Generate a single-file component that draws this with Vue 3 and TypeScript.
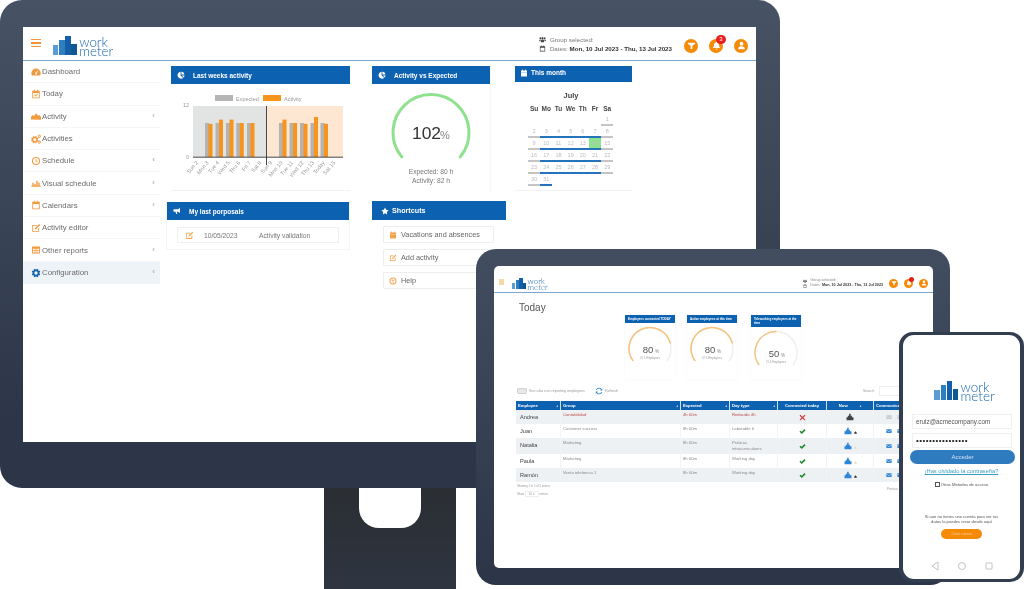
<script setup lang="ts">
const cog = (cx: number, cy: number, r: number) => {
  const pts: string[] = []
  for (let i = 0; i < 24; i++) {
    const rad = i % 3 === 0 ? r * 0.72 : r
    const a = (i * Math.PI) / 12
    pts.push(`${(cx + rad * Math.cos(a)).toFixed(2)} ${(cy + rad * Math.sin(a)).toFixed(2)}`)
  }
  const h = r * 0.38
  return `M${pts.join('L')}zM${cx - h} ${cy}a${h} ${h} 0 1 0 ${2 * h} 0a${h} ${h} 0 1 0 ${-2 * h} 0z`
}

const icons: Record<string, string> = {
  tach: 'M8 2.5a7.5 7.5 0 0 0-7.5 7.5c0 1.5.4 2.7 1 3.5h13c.6-.8 1-2 1-3.5A7.5 7.5 0 0 0 8 2.5zM8 12a1.6 1.6 0 1 1 .3-3.2l2.2-3 .9.6-2.1 3.1A1.6 1.6 0 0 1 8 12z',
  today: 'M2 2.8h2.5V1.2H6v1.6h4V1.2h1.5v1.6H14v12H2zM3.4 6.2v7.2h9.2V6.2zM5 9.4l1-1 1.4 1.4L10.2 7l1 1-3.8 3.8z',
  area: 'M0 13.5V9l3-2.5 2 1.5 3-4.5 3.5 4 2-1 2.5 3v4.5z',
  gears: cog(6, 9, 6) + cog(13.2, 3.6, 2.8) + cog(13.2, 13, 2.8),
  clock: 'M8 1.5a6.5 6.5 0 1 0 0 13 6.5 6.5 0 0 0 0-13zM8 3.2a4.8 4.8 0 1 1 0 9.6 4.8 4.8 0 0 1 0-9.6zM7.3 5h1.4v2.7l2 1.2-.7 1.1-2.7-1.6z',
  bars: 'M.5 12.5h15V14H.5zM2 7.5h2.2v5H2zM5.2 9.5h2.2v3H5.2zM8.4 4.5h2.2v8H8.4zM11.6 7h2.2v5.5h-2.2z',
  cal: 'M2 2.8h2.5V1.2H6v1.6h4V1.2h1.5v1.6H14v12H2zM3.4 6.2v7.2h9.2V6.2z',
  calFill: 'M2 2.8h2.5V1.2H6v1.6h4V1.2h1.5v1.6H14v4H2zM2 7.5h12v7.3H2z',
  edit: 'M2 3h8L8.6 4.4H3.4v8.2h8.2V8.4L13 7v7H2zM13 1.4l1.6 1.6-6.4 6.4-2.2.6.6-2.2z',
  table: 'M1.5 2.5h13v11h-13zM3 6v2h3V6zM7 6v2h2V6zM10 6v2h3V6zM3 9.3V12h3V9.3zM7 9.3V12h2V9.3zM10 9.3V12h3V9.3z',
  cog: cog(8, 8, 7),
  pie: 'M7.2 1.5v7.3l5.2 5.2A7 7 0 1 1 7.2 1.5zM8.8 1a7 7 0 0 1 6.2 6.2H8.8zM15 8.8a7 7 0 0 1-1.5 4.1L9.4 8.8z',
  horn: 'M14 2v10l-4-2.5H7.4L8.6 14H6.4L5 9.5H3a2.5 2.5 0 0 1 0-5h7z',
  star: 'M8 1l2.2 4.6 5 .7-3.6 3.5.9 5L8 12.4l-4.5 2.4.9-5L.8 6.3l5-.7z',
  help: 'M8 1a7 7 0 1 0 0 14A7 7 0 0 0 8 1zM8 3a5 5 0 1 1 0 10A5 5 0 0 1 8 3zM5 5.5h6v1.6H8.8v4.4H7.2V7.1H5z',
  group: 'M3 3a2 2 0 1 1 0 4 2 2 0 0 1 0-4zM8 2.5a2.4 2.4 0 1 1 0 4.8 2.4 2.4 0 0 1 0-4.8zM13 3a2 2 0 1 1 0 4 2 2 0 0 1 0-4zM4.6 14V10.5C4.6 9 6 8 8 8s3.4 1 3.4 2.5V14zM.5 12V9.5C.5 8.5 1.5 8 3 8c.6 0 1 .1 1.3.3-.6.5-.9 1.2-.9 2V12zM15.5 12V9.5c0-1-1-1.5-2.5-1.5-.6 0-1 .1-1.3.3.6.5.9 1.2.9 2V12z',
  filter: 'M1.5 3h13v1.8L9.5 9v5h-3V9L1.5 4.8z',
  bell: 'M8 1.5c.6 0 1 .4 1 1v.3c2.2.5 3.5 2.3 3.5 4.7 0 2 .7 3 1.5 3.8v1.2H2v-1.2c.8-.8 1.5-1.8 1.5-3.8 0-2.4 1.3-4.2 3.5-4.7v-.3c0-.6.4-1 1-1zM6.4 13.8h3.2a1.6 1.6 0 0 1-3.2 0z',
  user: 'M8 1.5a3.4 3.4 0 1 1 0 6.8 3.4 3.4 0 0 1 0-6.8zM2 14.5c0-3.2 2.4-5.2 6-5.2s6 2 6 5.2z',
  mail: 'M1 3h14v10H1zM2 4.6l6 4.6 6-4.6v1.3l-6 4.6-6-4.6z',
  check: 'M1 8.5L3.4 6l3 2.8 6-6.3L15 5l-8.5 8.8z',
  cross: 'M3.2 1.5L8 6.2l4.8-4.7 2 2L10 8.4l4.8 4.6-2 2L8 10.4 3.2 15l-2-2L6 8.4 1.2 3.5z',
  building: 'M1 14.5v-6h2.6v-3h2.6V1.5h3.2v4h2.4v3H15v6z',
  refresh: 'M8 1.5a6.5 6.5 0 0 1 5.2 2.6l1.3-1.3V7h-4.2l1.6-1.6A4.6 4.6 0 0 0 3.6 6H1.8A6.5 6.5 0 0 1 8 1.5zM14.2 10A6.5 6.5 0 0 1 2.8 11.9l-1.3 1.3V9h4.2l-1.6 1.6A4.6 4.6 0 0 0 12.4 10z',
}

const menu = [
  { label: 'Dashboard', icon: 'tach' },
  { label: 'Today', icon: 'today' },
  { label: 'Activity', icon: 'area', more: true },
  { label: 'Activities', icon: 'gears' },
  { label: 'Schedule', icon: 'clock', more: true },
  { label: 'Visual schedule', icon: 'bars', more: true },
  { label: 'Calendars', icon: 'cal', more: true },
  { label: 'Activity editor', icon: 'edit' },
  { label: 'Other reports', icon: 'table', more: true },
  { label: 'Configuration', icon: 'cog', more: true, active: true },
]

const shortcuts = [
  { label: 'Vacations and absences', icon: 'calFill' },
  { label: 'Add activity', icon: 'edit' },
  { label: 'Help', icon: 'help' },
]

const arc = (cx: number, cy: number, r: number, from: number, to: number) => {
  const pt = (deg: number) => {
    const a = (deg * Math.PI) / 180
    return `${(cx + r * Math.sin(a)).toFixed(2)} ${(cy - r * Math.cos(a)).toFixed(2)}`
  }
  return `M${pt(from)}A${r} ${r} 0 ${to - from > 180 ? 1 : 0} 1 ${pt(to)}`
}

// chart: y axis runs 0-12 over 51px, baseline at 157
const barY = (v: number) => 157 - (v * 51) / 12
const dayLabels = ['Sun 2', 'Mon 3', 'Tue 4', 'Wed 5', 'Thu 6', 'Fri 7', 'Sat 8', 'Sun 9', 'Mon 10', 'Tue 11', 'Wed 12', 'Thu 13', 'Today', 'Sat 15']
const tickX = (i: number) => 197.5 + i * 10.55
const chartBars = [
  { x: 205, actual: 7.8 },
  { x: 215.5, actual: 8.8 },
  { x: 226, actual: 8.8 },
  { x: 236.3, actual: 8 },
  { x: 247, actual: 8 },
  { x: 279, actual: 8.8 },
  { x: 289.5, actual: 8 },
  { x: 300, actual: 7.8 },
  { x: 310.5, actual: 9.4 },
  { x: 320.5, actual: 7.8 },
]

const weekDays = ['Su', 'Mo', 'Tu', 'We', 'Th', 'Fr', 'Sa']
const calendarCells = Array.from({ length: 37 }, (_, i) => {
  const day = i - 5
  return { day: day > 0 ? day : null, weekday: i % 7, today: day === 14 }
})

const miniCards = [
  { title: 'Employees connected TODAY', pct: 80, sub: '4 / 5 Employees', tall: false },
  { title: 'Active employees at this time', pct: 80, sub: '4 / 5 Employees', tall: false },
  { title: 'Teleworking employees at the time', pct: 50, sub: '2 / 4 Employees', tall: true },
]
const miniEnd = (pct: number) => -125 + (250 * pct) / 100

const columns = [
  { label: 'Employee', sort: true },
  { label: 'Group', sort: true },
  { label: 'Expected', sort: true },
  { label: 'Day type', sort: true },
  { label: 'Connected today', center: true },
  { label: 'Now', sort: true, center: true },
  { label: 'Communication' },
]
const rows = [
  { name: 'Andrea', group: 'Contabilidad', expected: '4h 00m', day: 'Reducido 4h', ok: false, late: true, extra: '' },
  { name: 'Juan', group: 'Customer success', expected: '8h 00m', day: 'Laborable 6', ok: true, late: false, extra: 'dark' },
  { name: 'Natalia', group: 'Marketing', expected: '8h 00m', day: 'Práticas intracurriculares', ok: true, late: false, extra: 'pale', tall: true },
  { name: 'Paula', group: 'Marketing', expected: '8h 00m', day: 'Working day', ok: true, late: false, extra: 'pale' },
  { name: 'Ramón', group: 'Venta telefonica 1', expected: '8h 00m', day: 'Working day', ok: true, late: false, extra: 'dark' },
]
</script>

<template>
  <div class="stage">
    <div class="stand"><div class="stand__notch"></div></div>

    <section class="monitor">
      <div class="monitor__screen">
        <header class="top">
          <span class="burger"><i></i><i></i><i></i></span>
          <div class="logo logo--lg">
            <span class="logo__bars"><i></i><i></i><i></i><i></i></span>
            <span class="logo__word">work<br />meter</span>
          </div>
          <div class="top__info">
            <div class="top__line">
              <svg class="ico" viewBox="0 0 16 16"><path :d="icons.group" /></svg>
              Group selected:
            </div>
            <div class="top__line">
              <svg class="ico" viewBox="0 0 16 16"><path :d="icons.cal" /></svg>
              <span>Dates: <b>Mon, 10 Jul 2023 - Thu, 13 Jul 2023</b></span>
            </div>
          </div>
          <div class="round-btns">
            <span class="round"><svg viewBox="0 0 16 16"><path :d="icons.filter" /></svg></span>
            <span class="round">
              <svg viewBox="0 0 16 16"><path :d="icons.bell" /></svg>
              <em class="round__badge">3</em>
            </span>
            <span class="round"><svg viewBox="0 0 16 16"><path :d="icons.user" /></svg></span>
          </div>
        </header>

        <div class="desk">
          <nav class="side">
            <a
              v-for="item in menu"
              :key="item.label"
              class="side__row"
              :class="{ 'side__row--active': item.active }"
            >
              <svg class="side__ico" viewBox="0 0 16 16"><path :d="icons[item.icon]" /></svg>
              <span class="side__txt">{{ item.label }}</span>
              <span v-if="item.more" class="side__more">‹</span>
            </a>
          </nav>

          <main class="desk__main">
            <div class="col col--a">
              <div class="card card--weeks">
                <h4 class="card__head">
                  <svg viewBox="0 0 16 16"><path :d="icons.pie" /></svg>
                  Last weeks activity
                </h4>
                <svg class="chart" viewBox="171 84 179 106">
                  <rect x="215" y="95" width="18" height="6" fill="#b4b4b4" />
                  <text x="236" y="100.5" class="chart__txt">Expected</text>
                  <rect x="263" y="95" width="18" height="6" fill="#f7941d" />
                  <text x="284" y="100.5" class="chart__txt">Activity</text>
                  <rect x="193" y="106" width="73" height="51" fill="#e2e4e3" />
                  <rect x="267" y="106" width="76" height="51" fill="#fde7d2" />
                  <text x="189" y="107" text-anchor="end" class="chart__txt">12</text>
                  <text x="189" y="159" text-anchor="end" class="chart__txt">0</text>
                  <g v-for="bar in chartBars" :key="bar.x">
                    <rect :x="bar.x" :y="barY(8)" width="4" :height="157 - barY(8)" fill="#b5b3b0" />
                    <rect :x="bar.x + 3.5" :y="barY(bar.actual)" width="4" :height="157 - barY(bar.actual)" fill="#f7941d" />
                  </g>
                  <path d="M193 157.2H343M266.5 106V165" stroke="#333" stroke-width="0.9" fill="none" />
                  <text
                    v-for="(d, i) in dayLabels"
                    :key="d"
                    class="chart__txt"
                    text-anchor="end"
                    :transform="`translate(${tickX(i) + 1} 163) rotate(-50)`"
                  >{{ d }}</text>
                </svg>
              </div>

              <div class="card card--prop">
                <h4 class="card__head">
                  <svg viewBox="0 0 16 16"><path :d="icons.horn" /></svg>
                  My last porposals
                </h4>
                <div class="prop">
                  <svg class="prop__ico" viewBox="0 0 16 16"><path :d="icons.edit" /></svg>
                  <span class="prop__date">10/05/2023</span>
                  <span>Activity validation</span>
                </div>
              </div>
            </div>

            <div class="col col--b">
              <div class="card card--vs">
                <h4 class="card__head">
                  <svg viewBox="0 0 16 16"><path :d="icons.pie" /></svg>
                  Activity vs Expected
                </h4>
                <svg class="gauge" viewBox="0 0 118 83">
                  <path :d="arc(59, 48.5, 38, -130, 130)" fill="none" stroke="#8ee28e" stroke-width="3" stroke-linecap="round" />
                  <text x="54.5" y="55" text-anchor="middle" class="gauge__val">102</text>
                  <text x="73" y="55" text-anchor="middle" class="gauge__pct">%</text>
                </svg>
                <p class="gauge__note">Expected: 80 h<br />Activity: 82 h</p>
              </div>

              <div class="card card--short">
                <h4 class="card__head card__head--short">
                  <svg viewBox="0 0 16 16"><path :d="icons.star" /></svg>
                  Shortcuts
                </h4>
                <a v-for="s in shortcuts" :key="s.label" class="short">
                  <svg class="short__ico" viewBox="0 0 16 16"><path :d="icons[s.icon]" /></svg>
                  {{ s.label }}
                </a>
              </div>
            </div>

            <div class="col col--c">
              <div class="card card--month">
                <h4 class="card__head card__head--month">
                  <svg viewBox="0 0 16 16"><path :d="icons.calFill" /></svg>
                  This month
                </h4>
                <div class="month">July</div>
                <div class="cal">
                  <b v-for="d in weekDays" :key="d" class="cal__wd">{{ d }}</b>
                  <span
                    v-for="(c, i) in calendarCells"
                    :key="i"
                    class="cal__day"
                    :class="{
                      'cal__day--none': !c.day,
                      'cal__day--work': c.day && c.weekday > 0 && c.weekday < 6,
                      'cal__day--today': c.today,
                    }"
                  >{{ c.day }}</span>
                </div>
              </div>
            </div>
          </main>
        </div>
      </div>
    </section>

    <section class="tablet">
      <div class="tablet__screen">
        <header class="ttop">
          <span class="ttop__burger"></span>
          <div class="logo logo--md">
            <span class="logo__bars"><i></i><i></i><i></i><i></i></span>
            <span class="logo__word">work<br />meter</span>
          </div>
          <div class="ttop__info">
            <div class="ttop__line">
              <svg class="ico" viewBox="0 0 16 16"><path :d="icons.group" /></svg>
              Group selected:
            </div>
            <div class="ttop__line">
              <svg class="ico" viewBox="0 0 16 16"><path :d="icons.cal" /></svg>
              <span>Dates: <b>Mon, 10 Jul 2023 - Thu, 13 Jul 2023</b></span>
            </div>
          </div>
          <div class="round-btns round-btns--sm">
            <span class="round"><svg viewBox="0 0 16 16"><path :d="icons.filter" /></svg></span>
            <span class="round">
              <svg viewBox="0 0 16 16"><path :d="icons.bell" /></svg>
              <em class="round__badge"></em>
            </span>
            <span class="round"><svg viewBox="0 0 16 16"><path :d="icons.user" /></svg></span>
          </div>
        </header>

        <div class="today">
          <h2 class="today__title">Today</h2>

          <div class="minis">
            <div v-for="m in miniCards" :key="m.title" class="mini">
              <div class="mini__head" :class="{ 'mini__head--tall': m.tall }">{{ m.title }}</div>
              <svg class="mini__gauge" viewBox="0 0 50 42">
                <path :d="arc(25, 25.5, 21, -125, 125)" fill="none" stroke="#efefef" stroke-width="1.5" stroke-linecap="round" />
                <path :d="arc(25, 25.5, 21, -125, miniEnd(m.pct))" fill="none" stroke="#f6c27c" stroke-width="1.5" stroke-linecap="round" />
                <text x="23" y="29.5" text-anchor="middle" class="mini__val">{{ m.pct }}</text>
                <text x="32" y="29.5" text-anchor="middle" class="mini__pct">%</text>
                <text x="25" y="35.5" text-anchor="middle" class="mini__sub">{{ m.sub }}</text>
              </svg>
            </div>
          </div>

          <div class="tools">
            <span class="switch"></span>
            <span class="tools__txt">See also non reporting employees</span>
            <svg class="tools__refresh" viewBox="0 0 16 16"><path :d="icons.refresh" /></svg>
            <span class="tools__txt">Refresh</span>
            <span class="tools__search">Search:</span>
            <span class="tools__input"></span>
          </div>

          <div class="grid">
            <div class="grid__row grid__row--head">
              <div v-for="c in columns" :key="c.label" class="grid__th" :class="{ 'is-center': c.center }">
                <span>{{ c.label }}</span><span v-if="c.sort" class="grid__sort">♦</span>
              </div>
            </div>
            <div
              v-for="r in rows"
              :key="r.name"
              class="grid__row"
              :class="{ 'grid__row--late': r.late, 'grid__row--tall': r.tall }"
            >
              <div class="grid__td grid__name">{{ r.name }}</div>
              <div class="grid__td">{{ r.group }}</div>
              <div class="grid__td">{{ r.expected }}</div>
              <div class="grid__td">{{ r.day }}</div>
              <div class="grid__td grid__cell">
                <svg class="grid__mark" :class="r.ok ? 'is-ok' : 'is-bad'" viewBox="0 0 16 16"><path :d="r.ok ? icons.check : icons.cross" /></svg>
              </div>
              <div class="grid__td grid__cell">
                <svg class="grid__now" :class="{ 'is-dark': !r.ok }" viewBox="0 0 16 16"><path :d="icons.building" /></svg>
                <svg v-if="r.extra" class="grid__extra" :class="`is-${r.extra}`" viewBox="0 0 16 16"><path :d="icons.building" /></svg>
              </div>
              <div class="grid__td grid__mails">
                <svg class="grid__mail" :class="{ 'is-off': !r.ok }" viewBox="0 0 16 16"><path :d="icons.mail" /></svg>
                <svg class="grid__mail" :class="{ 'is-off': !r.ok }" viewBox="0 0 16 16"><path :d="icons.mail" /></svg>
              </div>
            </div>
          </div>

          <div class="tfoot">
            <div>
              <p>Showing 1 to 5 of 5 entries</p>
              <p class="tfoot__len">Show <span class="tfoot__sel">10 ▾</span> entries</p>
            </div>
            <span class="tfoot__prev">Previous</span>
          </div>
        </div>
      </div>
    </section>

    <section class="phone">
      <div class="phone__screen">
        <div class="logo logo--xl">
          <span class="logo__bars"><i></i><i></i><i></i><i></i></span>
          <span class="logo__word">work<br />meter</span>
        </div>
        <div class="pfield">eruiz@acmecompany.com</div>
        <div class="pfield pfield--pass">••••••••••••••••</div>
        <button type="button" class="pbtn">Acceder</button>
        <a class="plink">¡Has olvidado la contraseña?</a>
        <div class="pother"><i></i>Otros Metodos de acceso</div>
        <p class="pnote">Si aun no tienes una cuenta para ver tus<br />datos la puedes crear desde aquí</p>
        <button type="button" class="pcreate">Crear cuenta</button>
        <div class="pnav">
          <svg viewBox="0 0 10 10"><path d="M8 1L2 5l6 4z" /></svg>
          <svg viewBox="0 0 10 10"><circle cx="5" cy="5" r="3.5" /></svg>
          <svg viewBox="0 0 10 10"><rect x="2" y="2" width="6" height="6" rx="0.5" /></svg>
        </div>
      </div>
    </section>
  </div>
</template>

<style scoped>
.stage {
  position: relative;
  width: 1024px;
  height: 589px;
  overflow: hidden;
  background: #fff;
  font-family: 'Liberation Sans', Arial, sans-serif;
  color: #666;
}

svg {
  fill: currentColor;
  fill-rule: evenodd;
}

/* devices */
.stand {
  position: absolute;
  left: 324px;
  top: 480px;
  width: 132px;
  height: 109px;
  background: linear-gradient(#2a2d31, #2e3541);
}

.stand__notch {
  position: absolute;
  left: 35px;
  top: 8px;
  width: 62px;
  height: 40px;
  background: #fff;
  border-radius: 0 0 20px 20px;
}

.monitor {
  position: absolute;
  left: 0;
  top: 0;
  box-sizing: border-box;
  width: 780px;
  height: 488px;
  padding: 27px 24px 46px 23px;
  border-radius: 22px;
  background: linear-gradient(#475364, #2c3648 85%);
}

.monitor__screen {
  height: 100%;
  background: #fff;
  overflow: hidden;
  filter: blur(0.35px);
}

.tablet {
  position: absolute;
  left: 476px;
  top: 249px;
  box-sizing: border-box;
  width: 474px;
  height: 336px;
  padding: 17px 17px 17px 18px;
  border-radius: 20px;
  background: linear-gradient(#424e60, #2b3547);
}

.tablet__screen {
  height: 100%;
  background: #fff;
  border-radius: 5px;
  overflow: hidden;
  filter: blur(0.35px);
}

.phone {
  position: absolute;
  left: 899px;
  top: 332px;
  box-sizing: border-box;
  width: 125px;
  height: 250px;
  padding: 3px 4px 3px 4px;
  border-radius: 14px;
  background: #323e50;
}

.phone__screen {
  position: relative;
  height: 100%;
  background: #fff;
  border-radius: 11px;
  overflow: hidden;
  padding-top: 46px;
  box-sizing: border-box;
  filter: blur(0.3px);
}

/* logo */
.logo {
  display: flex;
  align-items: flex-end;
  color: #1666ab;
}

.logo__bars {
  display: flex;
  align-items: flex-end;
  gap: 0.06em;
  height: 1.45em;
}

.logo__bars i {
  display: block;
  width: 0.4em;
}

.logo__bars i:nth-child(1) {
  height: 52%;
  background: #5a9cd3;
}

.logo__bars i:nth-child(2) {
  height: 80%;
  background: #2e7fc0;
}

.logo__bars i:nth-child(3) {
  height: 100%;
  background: #1360a8;
}

.logo__bars i:nth-child(4) {
  height: 58%;
  background: #0f5896;
}

.logo__word {
  margin: 0 0 -0.12em 0.18em;
  font-family: Lato, 'Liberation Sans', sans-serif;
  font-weight: 300;
  line-height: 0.72;
}

.logo--lg {
  font-size: 13.4px;
  margin-top: 4px;
}

.logo--md {
  font-size: 8px;
  margin-top: 1px;
}

.logo--xl {
  justify-content: center;
  font-size: 13.4px;
  margin-left: 6px;
}

/* monitor header */
.top {
  display: flex;
  align-items: center;
  box-sizing: border-box;
  height: 34px;
  padding: 0 8px 0 8px;
  border-bottom: 1px solid #7aa6d0;
}

.burger {
  display: flex;
  flex-direction: column;
  gap: 2px;
  width: 10px;
  margin: -1px 12px 0 0;
}

.burger i {
  display: block;
  height: 1.4px;
  background: #f29437;
}

.top__info {
  margin-left: auto;
  margin-right: 12px;
  font-size: 6.2px;
  line-height: 9px;
  color: #777;
}

.top__line {
  display: flex;
  align-items: center;
  gap: 3px;
}

.top__line b {
  color: #333;
}

.ico {
  width: 7px;
  height: 7px;
  margin-right: 1px;
  color: #444;
}

.round-btns {
  display: flex;
  gap: 11px;
  margin-top: 4px;
}

.round {
  position: relative;
  display: flex;
  align-items: center;
  justify-content: center;
  width: 14px;
  height: 14px;
  border-radius: 50%;
  background: #f58a07;
  color: #fff;
}

.round svg {
  width: 9px;
  height: 9px;
}

.round__badge {
  position: absolute;
  right: -3px;
  top: -4px;
  width: 10px;
  height: 9px;
  border-radius: 50%;
  background: #e81c1c;
  color: #fff;
  font-size: 6px;
  font-style: normal;
  line-height: 9px;
  text-align: center;
}

/* monitor sidebar */
.desk {
  display: flex;
}

.side {
  width: 137px;
  flex: none;
}

.side__row {
  display: flex;
  align-items: center;
  box-sizing: border-box;
  height: 22.3px;
  padding: 0 5px 0 8px;
  border-bottom: 1px solid #f6f6f6;
  font-size: 7.8px;
  color: #6c6c6c;
}

.side__row--active {
  background: #eef3f7;
  border-bottom: 0;
}

.side__ico {
  width: 10px;
  height: 10px;
  flex: none;
  margin-right: 1px;
  color: #f29a3e;
}

.side__row--active .side__ico {
  color: #1666ab;
}

.side__more {
  margin-left: auto;
  margin-top: -2px;
  font-size: 8px;
  color: #999;
}

/* monitor cards */
.desk__main {
  display: flex;
  align-items: flex-start;
  padding: 5px 0 0 6px;
}

.col--a {
  width: 184px;
}

.col--b {
  width: 134px;
  margin-left: 22px;
}

.col--c {
  width: 117px;
  margin-left: 9px;
}

.card {
  background: #fff;
}

.card__head {
  display: flex;
  align-items: center;
  margin: 0;
  height: 18px;
  padding-left: 6px;
  background: #0c61b1;
  color: #fff;
  font-size: 6.5px;
  font-weight: 700;
}

.card__head svg {
  width: 8px;
  height: 8px;
  margin-right: 8px;
}

.card--weeks {
  width: 179px;
  margin-left: 5px;
  border-bottom: 1px solid #f2f2f2;
}

.chart {
  display: block;
  width: 179px;
  height: 106px;
  color: #999;
}

.chart__txt {
  font-size: 5.5px;
  fill: #999;
}

.card--prop {
  margin-top: 11px;
  padding-bottom: 6px;
  border: 1px solid #f4f4f4;
  border-width: 0 1px 1px;
}

.prop {
  display: flex;
  align-items: center;
  box-sizing: border-box;
  height: 16px;
  margin: 7px 10px 0;
  padding-left: 7px;
  border: 1px solid #f0f0f0;
  font-size: 6.7px;
  color: #777;
}

.prop__ico {
  width: 9px;
  height: 9px;
  margin-right: 10px;
  color: #f3a24e;
}

.prop__date {
  width: 55px;
}

.card--vs {
  width: 118px;
  height: 126px;
  border-right: 1px solid #f7f7f7;
}

.gauge {
  display: block;
  width: 118px;
  height: 83px;
}

.gauge__val {
  font-size: 17.4px;
  fill: #333;
}

.gauge__pct {
  font-size: 11px;
  fill: #888;
}

.gauge__note {
  margin: 0;
  font-size: 6.7px;
  line-height: 9px;
  text-align: center;
  color: #777;
}

.card--short {
  margin-top: 9px;
}

.card__head--short {
  height: 19px;
  font-size: 7.2px;
  padding-left: 9px;
}

.card__head--short svg {
  margin-right: 3px;
}

.short {
  display: flex;
  align-items: center;
  box-sizing: border-box;
  width: 111px;
  height: 17px;
  margin: 6px 0 0 11px;
  padding-left: 5px;
  border: 1px solid #eee;
  border-radius: 1px;
  font-size: 7.3px;
  color: #666;
}

.short__ico {
  width: 8px;
  height: 8px;
  margin-right: 4px;
  color: #f4a24c;
}

.card--month {
  height: 124px;
  border-bottom: 1px solid #f3f3f3;
}

.card__head--month {
  height: 16px;
  padding: 0 0 3px 5px;
  box-sizing: border-box;
  font-size: 6.5px;
}

.card__head--month svg {
  margin-right: 3px;
}

.month {
  margin-top: 9px;
  padding-right: 5px;
  text-align: center;
  font-size: 7.5px;
  font-weight: 700;
  color: #444;
}

.cal {
  display: grid;
  grid-template-columns: repeat(7, 12.2px);
  grid-template-rows: 11px;
  grid-auto-rows: 12px;
  margin: 3px 0 0 13px;
  text-align: center;
  font-size: 6px;
}

.cal__wd {
  font-size: 6.5px;
  line-height: 11px;
  color: #444;
}

.cal__day {
  box-sizing: border-box;
  border-bottom: 2px solid #c4c4c4;
  color: #bcbcbc;
  line-height: 11px;
  font-size: 5.5px;
}

.cal__day--none {
  border-bottom: 0;
}

.cal__day--work {
  border-bottom-color: #2473bb;
}

.cal__day--today {
  background: #8ee28e;
}

/* tablet */
.ttop {
  display: flex;
  align-items: center;
  box-sizing: border-box;
  height: 27px;
  padding: 8px 5px 0 5px;
  border-bottom: 1px solid #7aa6d0;
}

.ttop__burger {
  width: 5px;
  height: 6px;
  margin: -3px 8px 0 0;
  background: #f6d9aa;
}

.ttop__info {
  margin-left: auto;
  margin-right: 6px;
  font-size: 3.7px;
  line-height: 5px;
  color: #888;
}

.ttop__line {
  display: flex;
  align-items: center;
  gap: 2px;
}

.ttop__line b {
  color: #333;
}

.ttop__line .ico {
  width: 4px;
  height: 4px;
}

.round-btns--sm {
  gap: 6px;
  margin-top: 0;
}

.round-btns--sm .round {
  width: 9px;
  height: 9px;
}

.round-btns--sm .round svg {
  width: 6px;
  height: 6px;
}

.round-btns--sm .round__badge {
  width: 5px;
  height: 5px;
  right: -1px;
  top: -2px;
}

.today {
  padding: 0 0 0 22px;
}

.today__title {
  margin: 0;
  padding: 9px 0 0 3px;
  height: 13px;
  font-size: 10px;
  font-weight: 400;
  line-height: 12px;
  color: #555;
}

.minis {
  display: flex;
  gap: 12px;
  margin-left: 109px;
}

.mini {
  width: 50px;
  height: 64px;
  box-shadow: 0 0 2px rgba(0, 0, 0, 0.06);
}

.mini:nth-child(3) {
  margin-left: 2px;
}

.mini__head {
  height: 8px;
  background: #0c61b1;
  color: #fff;
  font-size: 3px;
  font-weight: 700;
  line-height: 8px;
  padding-left: 3px;
  white-space: nowrap;
  overflow: hidden;
}

.mini__head--tall {
  height: 12px;
  line-height: 4px;
  padding: 2px 0 0 3px;
  box-sizing: border-box;
  white-space: normal;
}

.mini__gauge {
  display: block;
  width: 50px;
  height: 42px;
}

.mini__val {
  font-size: 9.5px;
  fill: #555;
}

.mini__pct {
  font-size: 4.5px;
  fill: #888;
}

.mini__sub {
  font-size: 2.8px;
  fill: #999;
}

.tools {
  display: flex;
  align-items: center;
  height: 12px;
  margin-top: 6px;
  margin-left: 1px;
  color: #999;
}

.switch {
  width: 10px;
  height: 6px;
  margin-right: 2px;
  border-radius: 3px;
  background: #e8e8e8;
  box-shadow: inset 0 0 0 0.5px #bbb;
}

.tools__txt {
  font-size: 3.7px;
}

.tools__refresh {
  width: 8px;
  height: 8px;
  margin: 0 2px 0 10px;
  color: #2b83d0;
}

.tools__search {
  margin-left: 245px;
  font-size: 3.5px;
}

.tools__input {
  width: 30px;
  height: 8px;
  margin-left: 4px;
  border: 1px solid #eee;
}

.grid {
  width: 408px;
  margin-top: 4px;
  font-size: 4.2px;
  line-height: 6px;
  color: #888;
}

.grid__row {
  display: grid;
  grid-template-columns: 45px 120px 49px 48px 49px 47px 50px;
  height: 14px;
}

.grid__row:nth-child(even) {
  background: #eef1f4;
}

.grid__row--head {
  height: 9px;
  background: #0c61b1;
}

.grid__row--tall {
  height: 16px;
}

.grid__row--late {
  color: #bd4b4b;
}

.grid__th {
  display: flex;
  align-items: center;
  justify-content: space-between;
  padding: 0 2px;
  border-right: 0.5px solid #cfe0f0;
  color: #fff;
  font-size: 4.2px;
  font-weight: 700;
  white-space: nowrap;
  overflow: hidden;
}

.grid__th.is-center {
  justify-content: center;
}

.grid__sort {
  font-size: 3px;
}

.grid__th.is-center .grid__sort {
  margin-left: 12px;
}

.grid__td {
  padding: 2px 2px 0;
  border-right: 0.5px solid #f3f3f3;
  overflow: hidden;
}

.grid__name {
  padding: 4px 0 0 4px;
  font-size: 5.6px;
  color: #444;
}

.grid__cell {
  display: flex;
  align-items: center;
  justify-content: center;
  padding: 0;
  gap: 2px;
}

.grid__mails {
  display: flex;
  align-items: center;
  gap: 5px;
  padding: 0 0 0 12px;
}

.grid__mark {
  width: 7px;
  height: 7px;
}

.is-ok {
  color: #1f8a32;
}

.is-bad {
  color: #d63c3c;
}

.grid__now {
  width: 8px;
  height: 8px;
  color: #2f86d8;
}

.grid__now.is-dark {
  color: #444;
}

.grid__extra {
  width: 3px;
  height: 3px;
  margin-top: 2px;
}

.is-dark {
  color: #333;
}

.is-pale {
  color: #e6dcc0;
}

.grid__mail {
  width: 6px;
  height: 6px;
  flex: none;
  color: #2f86d8;
}

.grid__mail.is-off {
  color: #c8c8c8;
}

.tfoot {
  display: flex;
  justify-content: space-between;
  width: 382px;
  margin-top: 3px;
  font-size: 2.8px;
  line-height: 3.5px;
  color: #999;
}

.tfoot p {
  margin: 0 0 4.5px;
  padding-left: 1px;
}

.tfoot__sel {
  padding: 0 3px;
  border: 0.5px solid #eee;
}

.tfoot__prev {
  margin-top: 3px;
}

/* phone */
.pfield {
  box-sizing: border-box;
  width: 100px;
  height: 15px;
  margin: 14px 0 0 9px;
  padding-left: 3px;
  border: 1px solid #f0f0f0;
  font-size: 6.3px;
  line-height: 13px;
  color: #555;
}

.pfield--pass {
  margin-top: 4px;
  font-size: 8px;
  letter-spacing: 0.45px;
  color: #222;
}

.pbtn {
  display: block;
  width: 105px;
  height: 14px;
  margin: 2px 0 0 7px;
  padding: 0;
  border: 0;
  border-radius: 7px;
  background: #2f7bc0;
  color: #cfe2f3;
  font-family: inherit;
  font-size: 6px;
}

.plink {
  display: block;
  margin-top: 3px;
  text-align: center;
  font-size: 5.7px;
  line-height: 9px;
  color: #3d9ec4;
  text-decoration: underline;
}

.pother {
  display: flex;
  align-items: center;
  justify-content: center;
  margin-top: 5px;
  font-size: 4.2px;
  line-height: 7px;
  color: #555;
}

.pother i {
  width: 3px;
  height: 3px;
  margin-right: 1px;
  border: 0.5px solid #555;
}

.pnote {
  margin: 26px 0 0;
  text-align: center;
  font-size: 4.1px;
  line-height: 5px;
  color: #555;
}

.pcreate {
  display: block;
  width: 41px;
  height: 10px;
  margin: 5px auto 0;
  padding: 0;
  border: 0;
  border-radius: 5px;
  background: #f58a07;
  color: #f9cf9c;
  font-family: inherit;
  font-size: 3.5px;
}

.pnav {
  display: flex;
  justify-content: center;
  gap: 17px;
  margin-top: 22px;
  margin-left: 1px;
  color: #b5b5b5;
}

.pnav svg {
  width: 10px;
  height: 10px;
  fill: none;
  stroke: currentColor;
  stroke-width: 0.8;
}
</style>

<style>
body {
  background: #fff;
}
</style>
